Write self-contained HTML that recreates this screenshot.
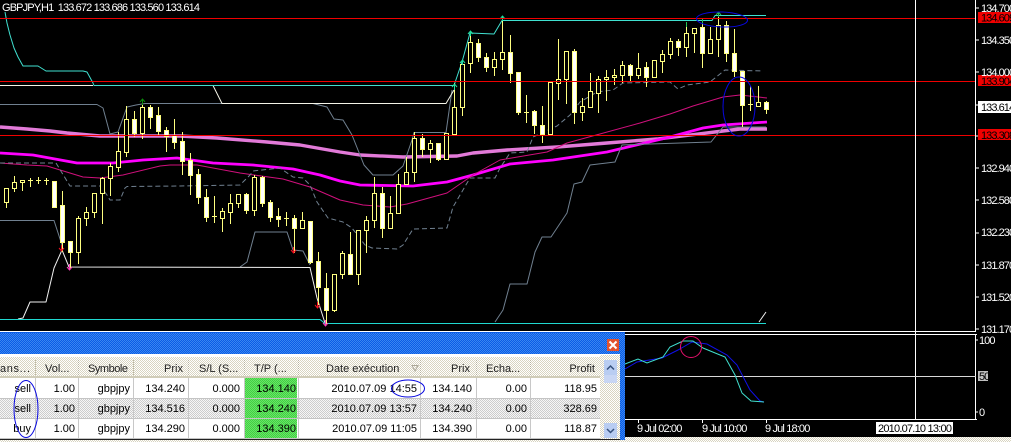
<!DOCTYPE html>
<html><head><meta charset="utf-8"><title>GBPJPY,H1</title>
<style>
html,body{margin:0;padding:0;background:#000;width:1011px;height:442px;overflow:hidden}
svg{display:block;font-family:"Liberation Sans",sans-serif}
.c{shape-rendering:crispEdges}
.t{font-size:11px;fill:#fff;letter-spacing:-.95px}
.m{font-size:11px;fill:#fff;letter-spacing:-.85px}
.k{font-size:11px;fill:#000;letter-spacing:-.95px}
.h{font-size:11px;fill:#222}
.r{font-size:11px;fill:#000;text-anchor:end}
.e{text-anchor:end}
</style></head><body>
<svg width="1011" height="442" viewBox="0 0 1011 442" xmlns="http://www.w3.org/2000/svg">
<defs>
<pattern id="bl" width="2" height="2" patternUnits="userSpaceOnUse"><rect width="2" height="2" fill="#0a5ce6"/><rect width="1" height="1" fill="#3a86f0"/><rect x="1" y="1" width="1" height="1" fill="#3a86f0"/></pattern>
<pattern id="be" width="2" height="2" patternUnits="userSpaceOnUse"><rect width="2" height="2" fill="#fff"/><rect width="1" height="1" fill="#d8d4c0"/><rect x="1" y="1" width="1" height="1" fill="#d8d4c0"/></pattern>
<pattern id="gr" width="2" height="2" patternUnits="userSpaceOnUse"><rect width="2" height="2" fill="#f6f6f6"/><rect width="1" height="1" fill="#cccccc"/><rect x="1" y="1" width="1" height="1" fill="#cccccc"/></pattern>
<pattern id="gn" width="2" height="2" patternUnits="userSpaceOnUse"><rect width="2" height="2" fill="#66e866"/><rect width="1" height="1" fill="#44cc44"/><rect x="1" y="1" width="1" height="1" fill="#44cc44"/></pattern>
</defs>
<rect width="1011" height="442" fill="#000"/>

<!-- indicator lines -->
<g fill="none" stroke-linejoin="round">
<path d="M0 127L27 129L50 131L67 133L100 136L180 136L217 138L267 142L300 145L340 152L360 155L403 157L457 156L473 153L507 150L557 147L607 143L657 139L698 134L723 131L740 129L767 129" stroke="#e27ad8" stroke-width="3.4"/>
<path d="M0 153L33 155L77 163L113 163L143 160L177 158L213 163L253 165L293 169L320 175L340 181L360 185L413 186L447 182L473 175L510 164L553 160L607 152L670 137L703 128L723 125L767 122" stroke="#ff00ff" stroke-width="2.8"/>
<path d="M0 163L27 165L47 166L83 177L100 178L123 175L160 166L170 165L197 165L240 173L283 179L310 187L340 200L363 205L390 207L407 204L447 193L473 175L500 160L547 152L567 143L640 123L670 114L693 106L723 97L740 95L767 98" stroke="#d0107c" stroke-width="1"/>
<path d="M0 104.500L97 104.500L103 108L110 134L118 132L127 107L136 105L145 103.500L313 103.500L327 107L334 119L343 120L352 135L364 165L373 175L393 175L403 166L412 140L414 132.500L446 132.500L452 90" stroke="#708090" stroke-width="1"/>
<path d="M0 163L56 163L70 186L100 186L107 195L110 200L120 200L125 188L127 186.500L180 186L240 185L250 175L253 171L280 168L293 177L303 178L310 185L317 202L328 218L343 222L352 228L365 245L372 248L397 249L403 245L413 229L447 228L453 207L470 178L495 178L500 168L510 153L527 152L533 137L557 126L570 115L580 102L597 92L613 90L623 83L670 82L678 89L687 85L710 82L715 78L725 70L763 71" stroke="#708090" stroke-width="1" stroke-dasharray="5 3"/>
<path d="M0 220.500L54 220.500L62 245M240 267L247 262L255 232L287 232L293 250L303 251L310 265M495 322L503 310L510 284L527 284L535 252L542 237L551 237L567 213L574 184L582 182L590 165L615 162L622 145L711 142L723 127L766 127" stroke="#708090" stroke-width="1"/>
<path d="M18 319L23 318L30 302L46 302L54 268L62 250L69 267L310 267.500L317 298L325 323M759 322L766 312" stroke="#f0f0f0" stroke-width="1"/>
<path d="M0 85.500L93 85.500M213 85.500L222 103.500L446 103.500L454 90" stroke="#f4f4e8" stroke-width="1"/>
<path d="M5 12L7 23L10 35L14 48L18 57L23 66L38 66L46 71L83 71L87 72L93 83L94 85.500L454 85.500L462 62L470 33L494 34L502 20.500L712 20.500L715 15.500L766 15.500" stroke="#40e0d0" stroke-width="1"/>
<path d="M0 319.500L320 319.500L325 323.500L766 323.500" stroke="#20d8d0" stroke-width="1"/>
</g>

<!-- candles -->
<g class="c" fill="none" stroke="#ffff80" stroke-width="1">
<path d="M6.500 188V208M14.500 176V192M22.500 180V191M30.500 178V187M38.500 177V184M46.500 178V185M54.500 181V208M62.500 191V252M70.500 241V268M78.500 216V264M86.500 207V226M94.500 193V218M102.500 177V224M110.500 163V196M118.500 132V172M126.500 106V157M134.500 111V137M142.500 100V139M150.500 105V129M158.500 107V136M166.500 127V152M174.500 119V149M182.500 132V175M190.500 153V195M198.500 169V204M206.500 189V222M214.500 196V223M222.500 208V232M230.500 194V224M238.500 194V208M246.500 193V214M254.500 175V216M262.500 176V207M270.500 200V222M278.500 208V227M286.500 212V226M294.500 215V253M302.500 212V228M310.500 221V264M318.500 252V305M326.500 273V324M334.500 274V312M342.500 251V279M350.500 232V274M358.500 230V285M366.500 216V253M374.500 177V228M382.500 187V238M390.500 196V228M398.500 174V214M406.500 157V184M414.500 132V182M422.500 134V157M430.500 140V163M438.500 143V161M446.500 133V159M454.500 83V135M462.500 62V116M470.500 32V73M478.500 39V62M486.500 53V72M494.500 52V76M502.500 17V70M510.500 35V83M518.500 72V115M526.500 95V123M534.500 110V134M542.500 106V143M550.500 81V135M558.500 39V100M566.500 51V104M574.500 49V124M582.500 98V121M590.500 73V107M598.500 76V113M606.500 70V101M614.500 69V85M622.500 61V83M630.500 64V81M638.500 53V79M646.500 62V87M654.500 60V77M662.500 50V73M670.500 38V59M678.500 39V56M686.500 23V57M694.500 28V53M702.500 20V68M710.500 27V54M718.500 13V57M726.500 21V62M734.500 29V77M742.500 71V127M750.500 86V111M758.500 86V107M766.500 101V114M28 180.500h5M36 180.500h5M44 180.500h5M212 216.500h5M284 218.500h5M524 112.500h5M748 104.500h5"/>
<path fill="#000" d="M4.500 188.500h4v14h-4zM12.500 182.500h4v6h-4zM20.500 180.500h4v2h-4zM76.500 218.500h4v34h-4zM84.500 212.500h4v6h-4zM92.500 193.500h4v19h-4zM100.500 178.500h4v15h-4zM108.500 166.500h4v12h-4zM116.500 151.500h4v16h-4zM124.500 119.500h4v33h-4zM140.500 107.500h4v26h-4zM220.500 211.500h4v7h-4zM228.500 203.500h4v9h-4zM236.500 194.500h4v9h-4zM252.500 177.500h4v33h-4zM300.500 220.500h4v8h-4zM332.500 274.500h4v36h-4zM340.500 253.500h4v21h-4zM356.500 230.500h4v44h-4zM364.500 220.500h4v10h-4zM372.500 193.500h4v27h-4zM388.500 213.500h4v15h-4zM396.500 184.500h4v29h-4zM404.500 172.500h4v12h-4zM412.500 138.500h4v34h-4zM428.500 143.500h4v6h-4zM444.500 133.500h4v26h-4zM452.500 107.500h4v27h-4zM460.500 64.500h4v43h-4zM468.500 42.500h4v21h-4zM492.500 59.500h4v8h-4zM500.500 52.500h4v7h-4zM548.500 82.500h4v52h-4zM556.500 79.500h4v4h-4zM564.500 51.500h4v28h-4zM580.500 106.500h4v6h-4zM588.500 91.500h4v16h-4zM596.500 79.500h4v14h-4zM604.500 77.500h4v2h-4zM612.500 75.500h4v2h-4zM620.500 65.500h4v10h-4zM636.500 68.500h4v7h-4zM652.500 60.500h4v17h-4zM660.500 54.500h4v7h-4zM668.500 41.500h4v13h-4zM684.500 33.500h4v14h-4zM692.500 28.500h4v5h-4zM708.500 39.500h4v14h-4zM716.500 25.500h4v14h-4zM756.500 102.500h4v4h-4z"/>
<path fill="#fff" d="M52.500 181.500h4v26h-4zM60.500 205.500h4v37h-4zM68.500 241.500h4v11h-4zM132.500 119.500h4v14h-4zM148.500 107.500h4v10h-4zM156.500 115.500h4v16h-4zM164.500 130.500h4v6h-4zM172.500 135.500h4v7h-4zM180.500 141.500h4v20h-4zM188.500 160.500h4v15h-4zM196.500 174.500h4v23h-4zM204.500 197.500h4v20h-4zM244.500 194.500h4v16h-4zM260.500 177.500h4v26h-4zM268.500 202.500h4v15h-4zM276.500 216.500h4v3h-4zM292.500 218.500h4v10h-4zM308.500 221.500h4v41h-4zM316.500 261.500h4v26h-4zM324.500 288.500h4v22h-4zM348.500 254.500h4v20h-4zM380.500 193.500h4v35h-4zM420.500 138.500h4v11h-4zM436.500 143.500h4v16h-4zM476.500 43.500h4v14h-4zM484.500 57.500h4v10h-4zM508.500 52.500h4v21h-4zM516.500 72.500h4v40h-4zM532.500 111.500h4v14h-4zM540.500 125.500h4v9h-4zM572.500 51.500h4v61h-4zM628.500 65.500h4v10h-4zM644.500 67.500h4v10h-4zM676.500 41.500h4v6h-4zM700.500 27.500h4v26h-4zM724.500 25.500h4v28h-4zM732.500 53.500h4v18h-4zM740.500 71.500h4v34h-4zM764.500 102.500h4v7h-4z"/>
</g>

<!-- arrows -->
<g fill="none" stroke-width="1">
<path d="M142.500 105V99M140 102l2.500-3 2.500 3" stroke="#0a8a0a"/>
<path d="M454.500 90V84M452 87l2.500-3 2.500 3M462.500 65V60M460 63l2.500-3 2.500 3M470.500 36V31M468 34l2.500-3 2.500 3M502.500 21V16M500 19l2.500-3 2.500 3" stroke="#20e0a0"/>
<path d="M686.500 27V22M702.500 24V19M718.500 17V12M716 15l2.500-3 2.500 3" stroke="#20c050"/>
<path d="M61.500 245V251M59 248l2.500 3 2.500-3M293.500 247V253M291 250l2.500 3 2.500-3M317.500 302V308M315 305l2.500 3 2.500-3" stroke="#f01020"/>
<path d="M69.500 264V270M67 267l2.500 3 2.500-3M325.500 320V326M323 323l2.500 3 2.500-3" stroke="#ff40c0"/>
</g>

<!-- horizontal lines, grid and axes -->
<g class="c">
<rect x="0" y="18" width="975" height="1" fill="#f00000"/>
<rect x="0" y="81" width="975" height="1" fill="#f00000"/>
<rect x="0" y="135" width="975" height="1" fill="#f00000"/>
<rect x="915" y="0" width="1" height="420" fill="#fff"/>
<rect x="975" y="0" width="1" height="331" fill="#fff"/>
<path d="M976 8h3M976 40h3M976 72h3M976 105h3M976 136h3M976 168h3M976 200h3M976 233h3M976 265h3M976 297h3M976 329h3" stroke="#fff"/>
<rect x="0" y="331" width="976" height="1" fill="#fff"/>
<rect x="0" y="334" width="977" height="1" fill="#fff"/>
<rect x="975" y="334" width="1" height="86" fill="#fff"/>
<rect x="625" y="376" width="351" height="1" fill="#d8d8d8"/>
<rect x="625" y="419" width="352" height="1" fill="#fff"/>
<path d="M638.500 420v3M702.500 420v3M766.500 420v3M976 340h2M976 412h2" stroke="#fff"/>
<rect x="978" y="12" width="33" height="11" fill="#f00000"/>
<rect x="978" y="75" width="33" height="11" fill="#f00000"/>
<rect x="978" y="129" width="33" height="11" fill="#f00000"/>
<rect x="978" y="101" width="33" height="12" fill="#fff"/>
<rect x="978" y="371" width="10" height="10" fill="#c0c0c0"/>
</g>

<text x="2" y="11" class="t" xml:space="preserve" textLength="197">GBPJPY,H1  133.672 133.686 133.560 133.614</text>
<text x="981" y="12" class="t">134.700</text>
<text x="981" y="21.500" class="k">134.609</text>
<text x="981" y="44" class="t">134.350</text>
<text x="981" y="76" class="t">134.000</text>
<text x="981" y="85" class="k">133.904</text>
<text x="981" y="111" class="k">133.614</text>
<text x="981" y="139" class="k">133.308</text>
<text x="981" y="172" class="t">132.940</text>
<text x="981" y="204" class="t">132.580</text>
<text x="981" y="236" class="t">132.230</text>
<text x="981" y="269" class="t">131.870</text>
<text x="981" y="301" class="t">131.520</text>
<text x="981" y="333" class="t">131.170</text>
<text x="979" y="344" class="t">100</text>
<text x="979" y="380" class="k">50</text>
<text x="979" y="416" class="t">0</text>

<!-- oscillator -->
<g fill="none" stroke-width="1">
<path d="M625 369L637 362L662 358L678 350L692 342L707 344L727 355L737 365L750 390L760 401L764 402" stroke="#1010e8"/>
<path d="M625 364L638 359L647 363L663 357L670 347L683 341L693 341L703 348L725 357L735 375L742 393L751 401L764 402" stroke="#40e0d0"/>
</g>

<!-- time axis -->
<text x="637" y="432" class="m">9 Jul 02:00</text>
<text x="702" y="432" class="m">9 Jul 10:00</text>
<text x="765" y="432" class="m">9 Jul 18:00</text>
<rect x="876" y="422" width="77" height="12" fill="#fff" class="c"/>
<text x="878" y="432" class="k" textLength="73">2010.07.10 13:00</text>
<rect x="625" y="437" width="386" height="5" fill="url(#be)" class="c"/>

<!-- trade window -->
<g class="c">
<rect x="0" y="332" width="625" height="110" fill="#0a5ce6"/>
<rect x="0" y="333" width="620" height="21" fill="url(#bl)"/>
<rect x="620" y="333" width="5" height="107" fill="url(#bl)"/>
<rect x="0" y="354" width="620" height="86" fill="#fff"/>
<rect x="0" y="357" width="600" height="19" fill="url(#be)"/>
<rect x="0" y="376" width="600" height="2" fill="#d0ccb8"/>
<rect x="0" y="398" width="600" height="20" fill="url(#gr)"/>
<rect x="245" y="378" width="52" height="20" fill="url(#gn)"/>
<rect x="245" y="399" width="52" height="19" fill="url(#gn)"/>
<rect x="245" y="419" width="52" height="19" fill="url(#gn)"/>
<path d="M0 398.500H600M0 418.500H600M0 438.500H600" stroke="#c4c4c4"/>
<path d="M35.500 378V438M78.500 378V438M133.500 378V438M188.500 378V438M244.500 378V438M298.500 378V438M420.500 378V438M476.500 378V438M530.500 378V438" stroke="#c8c8c8"/>
<path d="M35.500 360V375M78.500 360V375M133.500 360V375M188.500 360V375M244.500 360V375M298.500 360V375M420.500 360V375M476.500 360V375M530.500 360V375" stroke="#b8b4a0" stroke-dasharray="1 1"/>
<rect x="600" y="355" width="20" height="85" fill="url(#be)"/>
<rect x="604" y="360" width="13" height="15" fill="#b9cdf2"/>
<rect x="604" y="375" width="13" height="8" fill="#c8d6f4"/>
<rect x="604" y="423" width="13" height="15" fill="#b9cdf2"/>
<rect x="0" y="439" width="620" height="1" fill="#222"/>
<rect x="0" y="440" width="625" height="2" fill="url(#be)"/>
<rect x="607" y="339" width="12" height="12" fill="#e2522e"/>
</g>
<path d="M609.500 341.500l7 7m0-7l-7 7" stroke="#fff" stroke-width="2" fill="none"/>
<path d="M607 369.500l3.500-3.500 3.500 3.500M607 429l3.500 3.500 3.500-3.500" stroke="#34507c" stroke-width="1.500" fill="none"/>
<path d="M412 365.500h6l-3 5.500z" fill="none" stroke="#aca899"/>

<text x="0" y="372" class="h" textLength="30">ans...</text>
<text x="45" y="372" class="h">Vol...</text>
<text x="88" y="372" class="h" textLength="40">Symbole</text>
<text x="183" y="372" class="h e">Prix</text>
<text x="199" y="372" class="h">S/L (S...</text>
<text x="254" y="372" class="h">T/P (...</text>
<text x="326" y="372" class="h">Date exécution</text>
<text x="470" y="372" class="h e">Prix</text>
<text x="486" y="372" class="h">Echa...</text>
<text x="595" y="372" class="h e">Profit</text>

<text x="31" y="392" class="r">sell</text><text x="75" y="392" class="r">1.00</text><text x="130" y="392" class="r">gbpjpy</text><text x="185" y="392" class="r">134.240</text><text x="240" y="392" class="r">0.000</text><text x="296" y="392" class="r">134.140</text><text x="417" y="392" class="r">2010.07.09 14:55</text><text x="472" y="392" class="r">134.140</text><text x="527" y="392" class="r">0.00</text><text x="597" y="392" class="r">118.95</text>
<text x="31" y="412" class="r">sell</text><text x="75" y="412" class="r">1.00</text><text x="130" y="412" class="r">gbpjpy</text><text x="185" y="412" class="r">134.516</text><text x="240" y="412" class="r">0.000</text><text x="296" y="412" class="r">134.240</text><text x="417" y="412" class="r">2010.07.09 13:57</text><text x="472" y="412" class="r">134.240</text><text x="527" y="412" class="r">0.00</text><text x="597" y="412" class="r">328.69</text>
<text x="31" y="432" class="r">buy</text><text x="75" y="432" class="r">1.00</text><text x="130" y="432" class="r">gbpjpy</text><text x="185" y="432" class="r">134.290</text><text x="240" y="432" class="r">0.000</text><text x="296" y="432" class="r">134.390</text><text x="417" y="432" class="r">2010.07.09 11:05</text><text x="472" y="432" class="r">134.390</text><text x="527" y="432" class="r">0.00</text><text x="597" y="432" class="r">118.87</text>

<!-- hand-drawn annotations -->
<g fill="none" stroke-width="1">
<ellipse cx="722" cy="19.500" rx="25.500" ry="7.500" stroke="#0808e0" transform="rotate(2 722 19.500)"/>
<ellipse cx="739" cy="106.500" rx="16" ry="29.500" stroke="#0808e0"/>
<ellipse cx="26" cy="409" rx="12" ry="28.500" stroke="#0808e0"/>
<ellipse cx="408" cy="388.500" rx="16.500" ry="8.500" stroke="#0808e0"/>
<circle cx="691" cy="347" r="10.500" stroke="#e8106c"/>
</g>
</svg>
</body></html>
